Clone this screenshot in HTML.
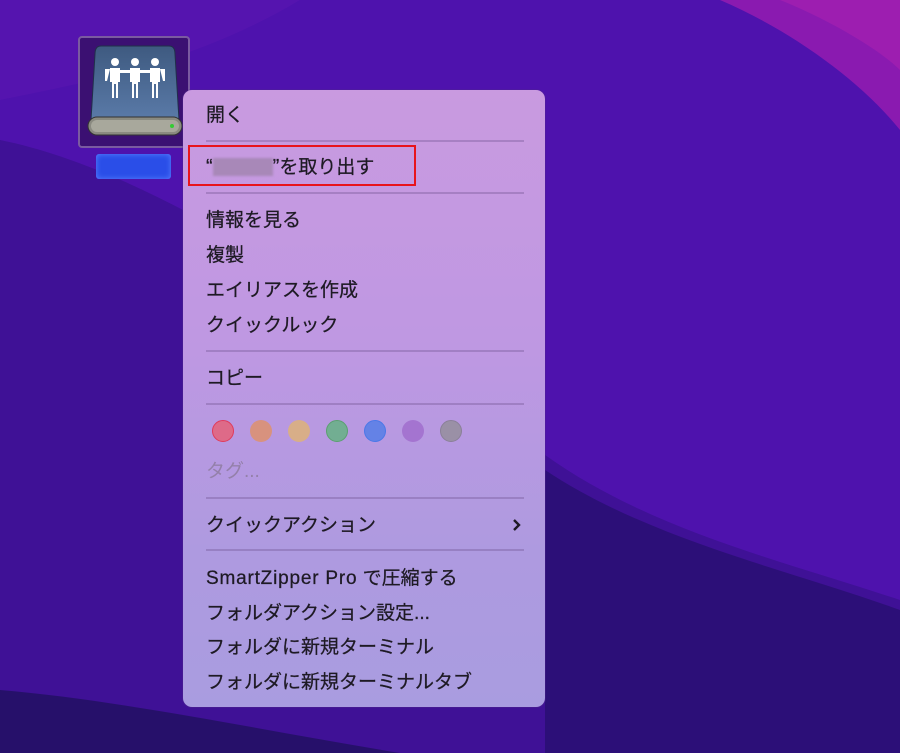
<!DOCTYPE html>
<html><head><meta charset="utf-8"><style>
*{margin:0;padding:0;box-sizing:border-box}
body{width:900px;height:753px;overflow:hidden;position:relative;font-family:"Liberation Sans","Noto Sans CJK JP",sans-serif;background:#4a14a8}
svg.bg{position:absolute;left:0;top:0}
.menu{position:absolute;left:183px;top:90px;width:362px;height:617px;border-radius:9px;background:linear-gradient(180deg,#c99ae0 0%,#bf98e2 40%,#ae9ae0 75%,#a99ce0 100%);box-shadow:0 0 0 1px rgba(80,40,140,.35)}
.it{position:absolute;left:23px;font-size:19px;color:#1e1a24;white-space:nowrap;line-height:20px;-webkit-text-stroke:0.25px #1e1a24}
.sep{position:absolute;left:23px;width:318px;height:2px;background:rgba(110,80,140,.35)}
.dot{position:absolute;width:22px;height:22px;border-radius:50%;top:330px}
</style></head><body>
<svg class="bg" width="900" height="753">
<rect width="900" height="753" fill="#4e12ad"/>
<path d="M0 140 C150 170 350 300 545 455 C650 530 780 560 900 600 V753 H0Z" fill="#3f1196"/>
<path d="M545 470 C650 540 790 570 900 610 V753 H545Z" fill="#2c0f78"/>
<path d="M0 690 C120 700 260 730 400 753 H0Z" fill="#26106a"/>
<path d="M720 0 C790 30 860 80 900 130 V0Z" fill="#8a1ab0"/>
<path d="M780 0 C830 20 880 50 900 70 V0Z" fill="#9d1eb0"/>
<path d="M0 0 H300 C200 60 100 80 0 100Z" fill="#5a16b0" opacity=".6"/>
</svg>
<div style="position:absolute;left:78px;top:36px;width:112px;height:112px;border:2px solid #7a5aa0;border-radius:4px;background:#3b1072"></div>
<svg style="position:absolute;left:85px;top:42px" width="100" height="100" viewBox="0 0 100 100">
<defs><linearGradient id="g" x1="0" y1="0" x2="0" y2="1"><stop offset="0" stop-color="#3e5a80"/><stop offset="1" stop-color="#5a7aa8"/></linearGradient></defs>
<path d="M16 4 H84 Q90 4 90 12 L94 78 H6 L10 12 Q10 4 16 4Z" fill="url(#g)" stroke="#20304a"/>
<rect x="3" y="75" width="94" height="18" rx="9" fill="#8a8a80" stroke="#333"/>
<rect x="6" y="78" width="88" height="12" rx="6" fill="#a8a89c"/>
<circle cx="87" cy="84" r="2" fill="#3c3"/>
<g fill="#fff"><circle cx="30" cy="20" r="4"/><circle cx="50" cy="20" r="4"/><circle cx="70" cy="20" r="4"/>
<path d="M25 26h10v14h-2v16h-2v-14h-2v14h-2v-16h-2z"/><path d="M45 26h10v14h-2v16h-2v-14h-2v14h-2v-16h-2z"/><path d="M65 26h10v14h-2v16h-2v-14h-2v14h-2v-16h-2z"/>
<path d="M20 27l5 0-3 12h-2zM35 28h10v3h-10zM55 28h10v3h-10zM75 27h5l0 12h-2z"/></g>
</svg>
<div style="position:absolute;left:96px;top:154px;width:75px;height:25px;background:#2a4ee8;border-radius:3px;box-shadow:inset 0 0 6px #5a80ff"></div>
<div class="menu">
<div class="it" style="top:16px">開く</div>
<div class="sep" style="top:50px"></div>
<div class="it" style="top:67px"><span style="font-size:20px">“</span><span style="display:inline-block;width:60px;height:18px;background:#a888b8;vertical-align:-3px;filter:blur(1px)"></span><span style="font-size:20px">”</span><span>を取り出す</span></div>
<div class="sep" style="top:102px"></div>
<div class="it" style="top:121px">情報を見る</div>
<div class="it" style="top:156px">複製</div>
<div class="it" style="top:191px">エイリアスを作成</div>
<div class="it" style="top:226px">クイックルック</div>
<div class="sep" style="top:260px"></div>
<div class="it" style="top:279px">コピー</div>
<div class="sep" style="top:313px"></div>
<div class="dot" style="left:29px;background:#de6a88;border:1px solid #e03a5a"></div>
<div class="dot" style="left:67px;background:#d8927e"></div>
<div class="dot" style="left:105px;background:#d8ae88"></div>
<div class="dot" style="left:143px;background:#72ae92;border:1px solid #5aa070"></div>
<div class="dot" style="left:181px;background:#6482e6;border:1px solid #4a78e8"></div>
<div class="dot" style="left:219px;background:#a474d0"></div>
<div class="dot" style="left:257px;background:#9a90a6;border:1px solid #8a8098"></div>
<div class="it" style="top:372px;color:#9480aa;-webkit-text-stroke:0">タグ...</div>
<div class="sep" style="top:407px"></div>
<div class="it" style="top:426px">クイックアクション</div>
<svg style="position:absolute;left:329px;top:428px" width="10" height="14"><path d="M2 2 L7 7 L2 12" fill="none" stroke="#1e1a24" stroke-width="2.4"/></svg>
<div class="sep" style="top:459px"></div>
<div class="it" style="top:479px"><span style="letter-spacing:0.8px">SmartZipper Pro</span> で圧縮する</div>
<div class="it" style="top:514px">フォルダアクション設定...</div>
<div class="it" style="top:548px">フォルダに新規ターミナル</div>
<div class="it" style="top:583px">フォルダに新規ターミナルタブ</div>
</div>
<div style="position:absolute;left:188px;top:145px;width:228px;height:41px;border:2px solid #e8141c"></div>
</body></html>
